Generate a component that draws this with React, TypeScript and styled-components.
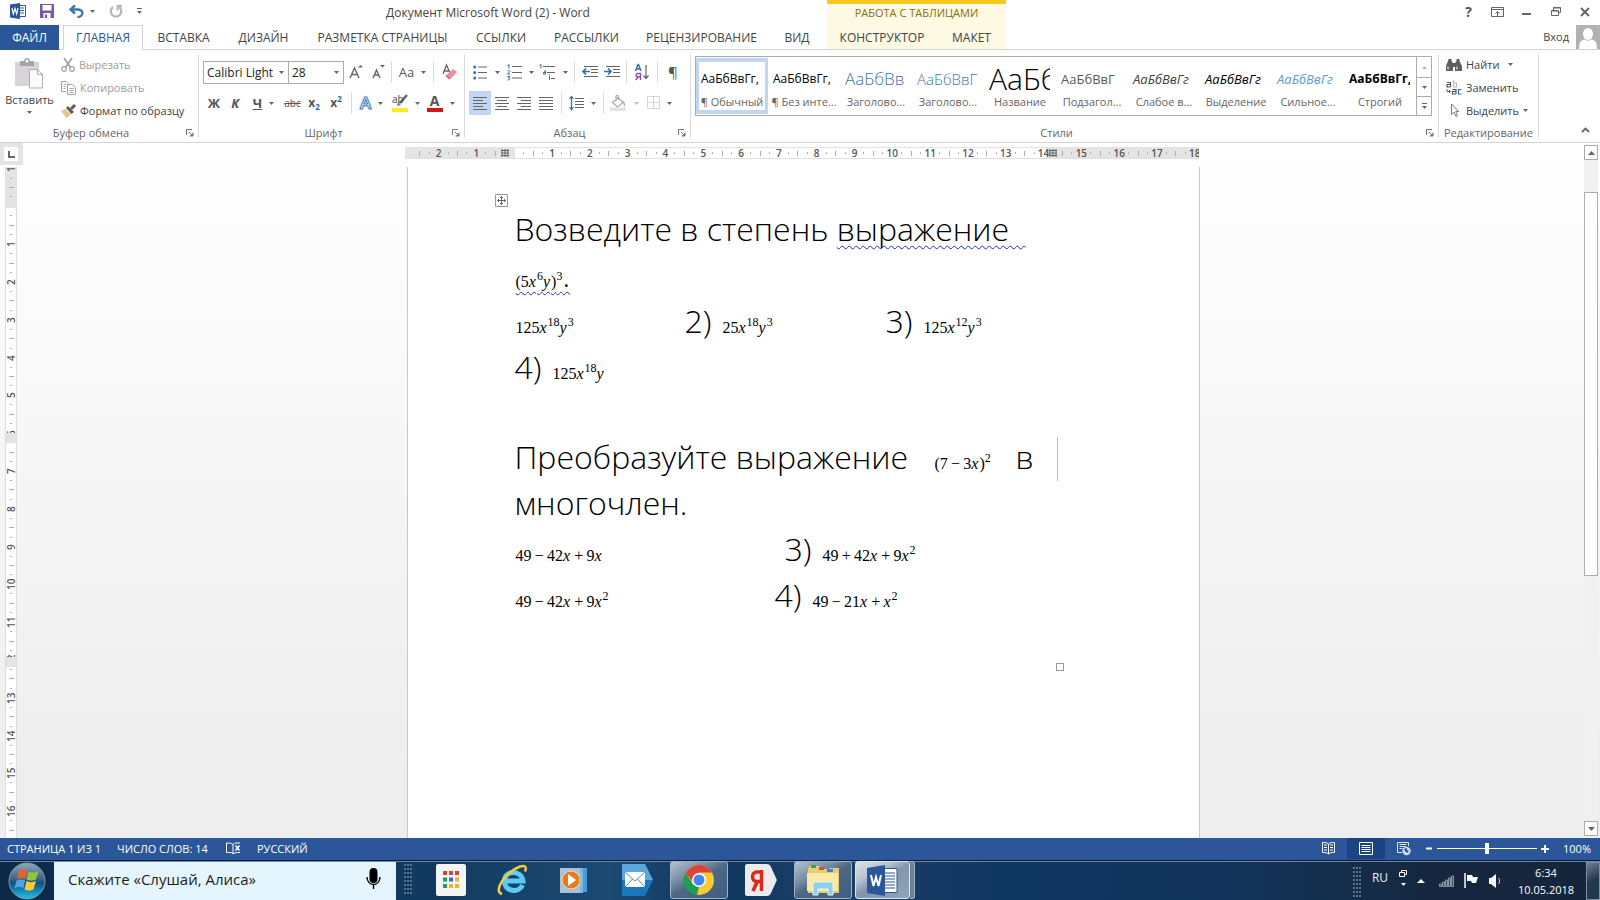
import React from "react";
import styled, { createGlobalStyle, css } from "styled-components";

const blue = "#2b579a";
const ui = `"Open Sans", "Noto Sans", sans-serif`;

const Global = createGlobalStyle`
  *, *::before, *::after { box-sizing: border-box; }
  body { margin: 0; font-family: ${ui}; font-size: 12px; color: #444; background: #fff; }
  button, select, input { font: inherit; color: inherit; }
  button { border: 0; background: none; padding: 0; cursor: pointer; }
  svg { overflow: visible; flex: none; }
`;

const Shell = styled.div`
  display: flex;
  flex-direction: column;
  height: 100vh;
  overflow: hidden;
`;

/* ---------- title bar and tabs ---------- */

const Header = styled.header`
  display: flex;
  height: 50px;
  flex: none;
  border-bottom: 1px solid #d4d4d4;
`;
const HeaderLeft = styled.div`
  width: 827px;
  flex: none;
`;
const TitleRow = styled.div`
  display: flex;
  height: 25px;
  align-items: center;
`;
const QuickAccess = styled.div`
  display: flex;
  align-items: center;
  width: 386px;
  padding: 0 0 3px 10px;
`;
const QuickButton = styled.button<{ $w: number }>`
  display: flex;
  align-items: center;
  gap: 6px;
  width: ${(p) => p.$w}px;
  height: 20px;
`;
const Title = styled.h1`
  margin: 0;
  font-size: 12px;
  font-weight: 400;
  line-height: 24px;
  white-space: nowrap;
`;
const TabRow = styled.nav`
  display: flex;
  height: 25px;
`;
const Tab = styled.button<{ $w: number; $kind?: "file" | "active" }>`
  width: ${(p) => p.$w}px;
  flex: none;
  height: 25px;
  line-height: 24px;
  font-size: 12px;
  text-align: center;
  white-space: nowrap;
  ${(p) => p.$kind === "file" && css`background: ${blue}; color: #fff; margin-right: 4px;`}
  ${(p) => p.$kind === "active" && css`
    height: 25px; background: #fff; color: ${blue};
    border: 1px solid #d4d4d4; border-bottom: 0; line-height: 22px; box-shadow: 0 1px 0 #fff;
  `}
`;
const ContextTabs = styled.div`
  width: 179px;
  flex: none;
  height: 49px;
  background: #fef9e2;
  border-top: 4px solid #f2c91f;
`;
const ContextTitle = styled.div`
  height: 21px;
  line-height: 18px;
  text-align: center;
  font-size: 11px;
  color: #8a6e08;
`;
const HeaderRight = styled.div`
  flex: 1;
  display: flex;
  flex-direction: column;
  align-items: flex-end;
`;
const WindowButtons = styled.div`
  display: flex;
  height: 25px;
  padding-right: 1px;
`;
const WindowButton = styled.button`
  display: flex;
  width: 29px;
  height: 23px;
  align-items: center;
  justify-content: center;
`;
const Account = styled.button`
  display: flex;
  gap: 7px;
  height: 24px;
  line-height: 24px;
  font-size: 11px;
`;

/* ---------- ribbon ---------- */

const Ribbon = styled.div`
  display: flex;
  height: 93px;
  flex: none;
  border-bottom: 1px solid #d4d4d4;
`;
const Group = styled.section<{ $w?: number }>`
  display: flex;
  flex-direction: column;
  width: ${(p) => (p.$w ? p.$w + "px" : "auto")};
  flex: ${(p) => (p.$w ? "none" : "1 1 0")};
  min-width: 0;
  margin: 4px 0;
  border-right: 1px solid #dcdcdc;
`;
const GroupBody = styled.div`
  flex: 1;
  display: flex;
  min-width: 0;
`;
const GroupFoot = styled.footer`
  display: grid;
  grid-template-columns: 1fr 12px;
  column-gap: 4px;
  align-items: center;
  height: 10px;
  line-height: 10px;
  font-size: 11px;
  color: #666;
  text-align: center;
  white-space: nowrap;
`;
const FootLabel = styled.span<{ $wide?: boolean }>`
  grid-column: ${(p) => (p.$wide ? "1 / -1" : "1")};
`;
const Launcher = styled.button`
  display: flex;
  height: 8px;
`;
const Stack = styled.div`
  display: flex;
  flex-direction: column;
  gap: 7px;
  padding: 6px 0 0 4px;
`;
const ToolRow = styled.div`
  display: flex;
  height: 24px;
  align-items: center;
`;
const Tool = styled.button<{ $w: number; $on?: boolean }>`
  display: flex;
  width: ${(p) => p.$w}px;
  height: 24px;
  flex: none;
  align-items: center;
  justify-content: center;
  gap: 7px;
  background: ${(p) => (p.$on ? "#c2d5f2" : "none")};
`;
const ToolSep = styled.span<{ $w: number }>`
  width: 1px;
  height: 22px;
  flex: none;
  margin: 0 ${(p) => Math.floor((p.$w - 1) / 2)}px 0 ${(p) => Math.ceil((p.$w - 1) / 2)}px;
  background: #dcdcdc;
`;
const Glyph = styled.span<{ $size?: number; $bold?: boolean; $italic?: boolean; $under?: boolean; $strike?: boolean; $color?: string }>`
  font-size: ${(p) => p.$size ?? 13}px;
  line-height: 18px;
  font-weight: ${(p) => (p.$bold ? 700 : 400)};
  font-style: ${(p) => (p.$italic ? "italic" : "normal")};
  text-decoration: ${(p) => (p.$under ? "underline" : p.$strike ? "line-through" : "none")};
  color: ${(p) => p.$color ?? "#555"};
  white-space: nowrap;
  sub, sup { font-size: 8px; line-height: 0; color: #2a6bab; }
`;
const OutlinedA = styled.span`
  font-size: 17px;
  line-height: 20px;
  font-weight: 600;
  color: #fff;
  -webkit-text-stroke: 1px #4a80bd;
  text-shadow: 0 0 3px #8fb6e4;
`;
const ColorBar = styled.span<{ $c: string }>`
  display: flex;
  align-items: center;
  justify-content: center;
  width: 16px;
  height: 18px;
  border-bottom: 4px solid ${(p) => p.$c};
`;
const Combo = styled.label<{ $w: number }>`
  display: flex;
  align-items: center;
  width: ${(p) => p.$w}px;
  height: 23px;
  flex: none;
  padding-right: 4px;
  border: 1px solid #ababab;
  & + & { border-left: 0; }
  select {
    flex: 1;
    min-width: 0;
    appearance: none;
    border: 0;
    padding: 0 0 0 3px;
    background: #fff;
    color: #222;
    outline: none;
  }
`;

const PasteButton = styled.button`
  display: flex;
  flex-direction: column;
  align-items: center;
  width: 59px;
  padding-top: 4px;
  line-height: 20px;
  gap: 1px;
  font-size: 11px;
`;
const CommandList = styled.div<{ $left?: number }>`
  display: flex;
  flex-direction: column;
  padding-left: ${(p) => p.$left ?? 0}px;
`;
const Command = styled.button<{ $off?: boolean }>`
  display: flex;
  align-items: center;
  gap: 4px;
  height: 23px;
  padding-bottom: 2px;
  font-size: 11px;
  color: ${(p) => (p.$off ? "#9d9d9d" : "#444")};
  white-space: nowrap;
`;

const Gallery = styled.div`
  display: flex;
  flex: 1;
  min-width: 0;
  height: 60px;
  margin: 2px 6px 0 4px;
  border: 1px solid #ababab;
`;
const StyleList = styled.div`
  display: flex;
  flex: 1;
  overflow: hidden;
  padding: 1px 0;
`;
const StyleCard = styled.button<{ $on?: boolean }>`
  display: flex;
  flex-direction: column;
  width: 72px;
  height: 56px;
  flex: none;
  padding: 0 1px;
  border: 4px solid ${(p) => (p.$on ? "#c2d5f2" : "transparent")};
  border-width: 4px 3px;
`;
const Sample = styled.span<{ $size: number; $color: string; $it?: boolean; $b?: boolean; $light?: boolean }>`
  display: block;
  width: 62px;
  height: 32px;
  line-height: 34px;
  overflow: hidden;
  text-align: left;
  white-space: nowrap;
  padding-left: 1px;
  font-size: ${(p) => p.$size}px;
  color: ${(p) => p.$color};
  font-style: ${(p) => (p.$it ? "italic" : "normal")};
  font-weight: ${(p) => (p.$b ? 700 : p.$light ? 300 : 400)};
`;
const StyleName = styled.span`
  display: flex;
  justify-content: center;
  line-height: 16px;
  font-size: 11px;
  color: #666;
  white-space: nowrap;
`;
const GalleryScroll = styled.div`
  display: grid;
  grid-template-rows: 20px 19px 1fr;
  width: 15px;
  border-left: 1px solid #ababab;
  button { display: flex; align-items: center; justify-content: center; }
  button + button { border-top: 1px solid #ababab; }
`;
const RibbonEnd = styled.div`
  display: flex;
  align-items: flex-end;
  justify-content: flex-end;
  width: 61px;
  flex: none;
  padding: 0 10px 5px 0;
`;

/* ---------- document area ---------- */

const Workspace = styled.main`
  display: grid;
  grid-template-columns: 23px 1fr 19px;
  flex: 1;
  min-height: 0;
  background: linear-gradient(#ffffff, #fdfdfd 10%, #eeeeee 90%);
`;
const SideRuler = styled.div`
  display: flex;
  flex-direction: column;
  min-height: 0;
`;
const Corner = styled.button`
  width: 23px;
  height: 22px;
  flex: none;
  margin-bottom: 2px;
  border: 4px solid #e4e4e4;
  border-right-width: 5px;
  background: #fff;
  display: flex;
  align-items: center;
  justify-content: center;
`;
const VRuler = styled.div`
  position: relative;
  flex: 1;
  width: 12px;
  margin-left: 5px;
  overflow: hidden;
  border-left: 1px solid #dedede;
  border-right: 1px solid #dedede;
  background: linear-gradient(#e4e4e4 41px, #fff 41px);
`;
const VCells = styled.div`
  display: grid;
  grid-template-rows: repeat(20, 1fr);
  height: 756px;
  margin-top: -22px;
`;
const RowMark = styled.span<{ $top: number }>`
  position: absolute;
  left: 0;
  top: ${(p) => p.$top}px;
  width: 100%;
  height: 10px;
  background: #e4e4e4;
`;
const VCell = styled.div`
  display: grid;
  grid-template-rows: repeat(4, 1fr);
  justify-items: center;
  align-items: center;
`;
const VNum = styled.span`
  writing-mode: vertical-rl;
  transform: rotate(180deg);
  font-size: 10px;
  line-height: 10px;
  height: 14px;
  text-align: center;
  font-weight: 600;
  color: #555;
  margin: -3px 0;
`;
const Dash = styled.i<{ $w: number; $h: number }>`
  width: ${(p) => p.$w}px;
  height: ${(p) => p.$h}px;
  background: #b0b0b0;
`;
const Canvas = styled.div`
  display: flex;
  flex-direction: column;
  align-items: center;
  min-height: 0;
  overflow: hidden;
`;
const HRuler = styled.div`
  width: 794px;
  height: 12px;
  flex: none;
  margin: 4px 0 8px;
  padding-left: 10px;
  overflow: hidden;
  border-top: 1px solid #e2e2e2;
  border-bottom: 1px solid #e2e2e2;
  background: linear-gradient(90deg, #e4e4e4 110px, #fff 110px, #fff 641px, #e4e4e4 641px);
`;
const HCells = styled.div`
  display: grid;
  grid-template-columns: repeat(21, 1fr);
  width: 794px;
`;
const HCell = styled.div`
  display: grid;
  grid-template-columns: repeat(4, 1fr);
  justify-items: center;
  align-items: center;
  height: 10px;
`;
const HNum = styled.span`
  display: flex;
  justify-content: center;
  width: 9px;
  font-size: 10px;
  line-height: 10px;
  font-weight: 600;
  color: #555;
`;
const Page = styled.article`
  position: relative;
  width: 793px;
  margin-left: 2px;
  flex: 1;
  min-height: 0;
  padding: 39px 0 0 107px;
  border: 1px solid #c8c8c8;
  border-width: 0 1px;
  background: #fff;
  color: #000;
`;
const Line = styled.p<{ $h?: number }>`
  display: flex;
  align-items: baseline;
  height: ${(p) => p.$h ?? 46}px;
  margin: 0;
  font-size: 32px;
  line-height: 46px;
  font-weight: 300;
  white-space: pre;
`;
const Seg = styled.span<{ $w?: number }>`
  width: ${(p) => (p.$w ? p.$w + "px" : "auto")};
  flex: none;
`;
const Wavy = styled.span`
  text-decoration: underline wavy #1f2bc0 1px;
  text-decoration-skip-ink: none;
  text-underline-offset: 4px;
`;
const Formula = styled.span`
  font-family: "Liberation Serif", serif;
  font-size: 16px;
  font-weight: 400;
  padding-left: 1px;
  sup { font-size: 12px; line-height: 0; vertical-align: 7px; }
  i { padding-right: 1px; }
`;
const TableHandle = styled.button`
  position: absolute;
  left: 87px;
  top: 27px;
  width: 13px;
  height: 13px;
  display: flex;
`;
const CellEdge = styled.span`
  position: absolute;
  left: 649px;
  top: 270px;
  width: 1px;
  height: 44px;
  background: #bdbdbd;
`;
const CellEnd = styled.span`
  position: absolute;
  left: 648px;
  top: 496px;
  width: 8px;
  height: 8px;
  border: 1px solid #999;
`;
const ScrollBar = styled.div`
  display: flex;
  flex-direction: column;
  padding: 2px 2px 2px 3px;
`;
const ScrollButton = styled.button`
  display: flex;
  align-items: center;
  justify-content: center;
  height: 15px;
  flex: none;
  border: 1px solid #ababab;
  background: #fff;
`;
const ScrollTrack = styled.div`
  flex: 1;
  padding-top: 32px;
  background: #f0f0f0;
`;
const ScrollThumb = styled.div`
  height: 61%;
  border: 1px solid #ababab;
  background: #fff;
`;

/* ---------- status bar ---------- */

const StatusBar = styled.footer`
  display: flex;
  align-items: center;
  height: 22px;
  flex: none;
  padding: 0 9px 1px 7px;
  background: ${blue};
  color: #fff;
  white-space: nowrap;
`;
const StatusItem = styled.button<{ $w: number }>`
  display: flex;
  width: ${(p) => p.$w}px;
  height: 21px;
  align-items: center;
  font-size: 11px;
`;
const ViewButton = styled.button<{ $on?: boolean }>`
  display: flex;
  width: 38px;
  height: 21px;
  align-items: center;
  justify-content: center;
  background: ${(p) => (p.$on ? "#1c4384" : "none")};
`;
const Spacer = styled.div`
  flex: 1;
`;
const ZoomButton = styled.button`
  display: flex;
  width: 12px;
  height: 21px;
  align-items: center;
  justify-content: center;
`;
const ZoomRange = styled.input`
  width: 100px;
  height: 12px;
  margin: 0 2px;
  appearance: none;
  background: linear-gradient(#fff, #fff) center / 100% 1px no-repeat;
  &::-webkit-slider-thumb { appearance: none; width: 4px; height: 11px; background: #fff; }
`;
const ZoomValue = styled.span`
  width: 40px;
  text-align: right;
  font-size: 11px;
`;

/* ---------- taskbar ---------- */

const TaskBar = styled.footer`
  display: flex;
  height: 40px;
  flex: none;
  border-top: 1px solid #0b1c33;
  background:
    linear-gradient(90deg, #0c2a48 0, #123a5f 27%, #1b4a73 38%, #10375f 45%, #1b4068 52%, #0f3561 64%, #123357 78%, #16273f 90%, #14253c);
  box-shadow: inset 0 1px 0 #6d87a3;
  color: #fff;
`;
const StartButton = styled.button`
  display: flex;
  width: 54px;
  align-items: center;
  justify-content: center;
`;
const VoiceSearch = styled.label`
  display: flex;
  align-items: center;
  justify-content: space-between;
  width: 342px;
  margin-top: 1px;
  padding: 0 15px 4px 14px;
  background: #e5f5fd;
  input {
    width: 260px;
    border: 0;
    padding: 0;
    outline: none;
    background: none;
    font-size: 15px;
    color: #1d1d1d;
  }
  input::placeholder { color: #1d1d1d; opacity: 1; }
`;
const Grip = styled.span`
  width: 9px;
  height: 31px;
  margin: 3px 0 0 8px;
  flex: none;
  background: radial-gradient(circle at 1px 1px, #5d738c 1px, transparent 1px) 0 0 / 3px 4px;
`;
const AppButton = styled.button<{ $w: number; $open?: boolean; $top?: boolean }>`
  display: flex;
  width: ${(p) => p.$w}px;
  height: 38px;
  flex: none;
  align-items: center;
  justify-content: center;
  ${(p) => p.$open && css`
    border: 1px solid #9fb1c4;
    border-radius: 3px;
    background: linear-gradient(150deg, #b4c1cf 0, #7a8fa6 32%, #4d6885 50%, #3f5e80 100%);
  `}
  ${(p) => p.$top && css`
    border-color: #dfe6ee;
    background: linear-gradient(150deg, #dbe2ea 0, #b4c1cf 32%, #8195ab 50%, #93a5b8 100%);
  `}
`;
const AppList = styled.div`
  display: flex;
  padding-left: 8px;
`;
const OpenGap = styled.span<{ $w: number }>`
  width: ${(p) => p.$w}px;
`;
const StackEdge = styled.span`
  width: 5px;
  height: 38px;
  border: 1px solid #9fb1c4;
  border-left: 0;
  border-radius: 0 3px 3px 0;
  background: #6b8199;
`;
const Tray = styled.div`
  display: flex;
  align-items: center;
`;
const TrayButton = styled.button<{ $w: number; $raised?: boolean }>`
  display: flex;
  flex-direction: column;
  gap: 6px;
  width: ${(p) => p.$w}px;
  height: 38px;
  padding-bottom: ${(p) => (p.$raised ? 6 : 0)}px;
  align-items: center;
  justify-content: center;
  font-size: 12px;
  color: #e8edf2;
`;
const Clock = styled.time`
  width: 80px;
  text-align: center;
  line-height: 17px;
  font-size: 11px;
`;
const ShowDesktop = styled.button`
  width: 14px;
  height: 38px;
  border: 1px solid #7c8fa3;
  background: linear-gradient(150deg, #6d7f92, #22364d 50%);
`;

/* ---------- icons ---------- */

const Arrow = ({ c = "#666", up = false }: { c?: string; up?: boolean }) => (
  <svg width="5" height="3" viewBox="0 0 5 3"><path d={up ? "M0 3h5L2.500 0z" : "M0 0h5L2.500 3z"} fill={c} /></svg>
);
const Svg = ({ w, h, children }: { w: number; h: number; children: React.ReactNode }) => (
  <svg width={w} height={h} viewBox={`0 0 ${w} ${h}`} fill="none" aria-hidden="true">{children}</svg>
);
const Lines = ({ rows, c = "#666", w = 15 }: { rows: [number, number][]; c?: string; w?: number }) => (
  <Svg w={w} h={13}>
    {rows.map(([x, len], i) => <path key={i} d={`M${x} ${i * 3 + 0.5}h${len}`} stroke={c} />)}
  </Svg>
);
const LauncherIcon = () => (
  <Svg w={8} h={8}><path d="M.5 6V.5H6M3 3l3 3M7 3.500V7H3.500" stroke="#777" /><path d="M4 7h3V4z" fill="#777" /></Svg>
);
const WordIcon = () => (
  <Svg w={16} h={16}>
    <path d="M9 2.500h6.500v11H9" stroke={blue} fill="#fff" />
    <path d="M10 5h4M10 7.500h4M10 10h4" stroke={blue} />
    <path d="M0 1.500L10 0v16L0 14.500z" fill={blue} />
    <path d="M2 5l1.300 6L5 5.500 6.700 11 8 5" stroke="#fff" strokeWidth="1.200" />
  </Svg>
);
const SaveIcon = () => (
  <Svg w={14} h={14}>
    <path d="M0 0h14v14H0z" fill="#7f57a5" />
    <path d="M2.500 1h9v5.500h-9zM3.500 9h7v5h-7z" fill="#fff" />
    <path d="M5 10.500h2V14H5z" fill="#7f57a5" />
  </Svg>
);
const UndoIcon = () => (
  <Svg w={15} h={13}>
    <path d="M2 4.500h6.500c7 0 6 7.500 0 7.500" stroke="#3b74b3" strokeWidth="2.400" />
    <path d="M6 .5L1.500 4.500 6 8.500" stroke="#3b74b3" strokeWidth="2.400" />
  </Svg>
);
const RedoIcon = () => (
  <Svg w={14} h={13}>
    <path d="M4 2A5.300 5.300 0 1 0 10 2" stroke="#b5b5b5" strokeWidth="2.200" />
    <path d="M8.500 5.500V1h4.500" stroke="#b5b5b5" strokeWidth="1.800" />
  </Svg>
);
const PasteIcon = () => (
  <Svg w={29} h={31}>
    <path d="M0 4h24v24H0z" fill="#d8d5d8" />
    <path d="M5 3h4c0-4 6-4 6 0h4v5H5z" fill="#a5a5a5" />
    <circle cx="12" cy="3" r="1.500" fill="#fff" />
    <path d="M14.500 11.500h8l5 5V30h-13z" fill="#fbfafb" stroke="#b3b0b3" />
    <path d="M22.500 11.500v5h5" stroke="#b3b0b3" />
  </Svg>
);
const ScissorsIcon = () => (
  <Svg w={14} h={14}>
    <path d="M3 0l6.500 9.500M11 0L4.500 9.500" stroke="#a3a3a3" strokeWidth="1.800" />
    <circle cx="3" cy="11" r="2.300" stroke="#a3a3a3" strokeWidth="1.200" />
    <circle cx="11" cy="11" r="2.300" stroke="#a3a3a3" strokeWidth="1.200" />
  </Svg>
);
const CopyIcon = () => (
  <Svg w={15} h={14}>
    <path d="M5 10.500H.5V.5h5l2 2V4M2.500 3.500h3M2.500 5.500h2M2.500 7.500h2" stroke="#a3a3a3" />
    <path d="M6.500 3.500h5l3 3v7h-8zM8.500 7.500h4M8.500 9.500h4M8.500 11.500h4" stroke="#a3a3a3" />
  </Svg>
);
const BrushIcon = () => (
  <Svg w={15} h={14}>
    <path d="M0 7l4-2 6 5-4 4C4 12 2 10 0 7z" fill="#e8c48c" />
    <path d="M5 4l2-2 6 6-2.500 2z" fill="#5c5c5c" />
    <path d="M10 5l4-4" stroke="#5c5c5c" strokeWidth="3" />
  </Svg>
);
const GrowA = ({ up }: { up: boolean }) => (
  <Svg w={14} h={16}>
    <path d={up ? "M0 14L4.500 4 9 14M1.500 10.500h6" : "M1 14L4.500 6 8 14M2 11h5"} stroke="#666" strokeWidth="1.400" />
    <path d={up ? "M8 3.500h5L10.500 1z" : "M8 1h5l-2.500 2.500z"} fill="#2f6fb0" />
  </Svg>
);
const EraserIcon = () => (
  <Svg w={15} h={16}>
    <path d="M1 10L4.500 1 8 9M2.500 7h4" stroke="#666" strokeWidth="1.300" />
    <path d="M5 10.500L11 5l4 3-6 6.500z" fill="#ee8da0" />
    <path d="M3.500 12L5 10.500l4 4-2 1z" fill="#e0677f" />
  </Svg>
);
const HighlightIcon = () => (
  <Svg w={16} h={14}>
    <path d="M15 1L8 9" stroke="#666" strokeWidth="2.500" />
    <path d="M5 12l1-4 3 3z" fill="#777" />
    <text x="0" y="9" fontSize="10" fill="#444" fontFamily="Open Sans">ab</text>
  </Svg>
);
const BulletsIcon = () => (
  <Svg w={15} h={15}>
    {[2, 7.5, 13].map((y) => <React.Fragment key={y}><circle cx="1.700" cy={y} r="1.500" fill="#2f6fb0" /><path d={`M5 ${y}h9`} stroke="#666" /></React.Fragment>)}
  </Svg>
);
const NumberingIcon = () => (
  <Svg w={15} h={16}>
    {[2.5, 8.500, 14].map((y, i) => <React.Fragment key={y}>
      <path d={["M.5 1.500L2 .5v4", "M.5 7c1-1 2.500-.5 2.500.5L.5 10H3", "M.5 12.500H3L1.500 14c2 0 2 2-.9 2"][i]} stroke="#2f6fb0" />
      <path d={`M5 ${y}h10`} stroke="#666" /></React.Fragment>)}
  </Svg>
);
const MultiIcon = () => (
  <Svg w={17} h={16}>
    <path d="M4 2.500h12M8 8.500h8M12 14.500h4" stroke="#666" />
    <path d="M.5 1.500L2 .5v4M6.500 10V7H5M6.500 8.500h-2V10h2M10.500 12.500V16M10.500 10.500v1" stroke="#2f6fb0" />
  </Svg>
);
const IndentIcon = ({ right }: { right?: boolean }) => (
  <Svg w={16} h={12}>
    <path d="M2 .5h14M9 3.500h7M9 6.500h7M2 10.500h14" stroke="#666" />
    <path d={right ? "M0 5.500h6M4 2.500l3 3-3 3" : "M8 5.500H2M4 2.500l-3 3 3 3"} stroke="#2f6fb0" strokeWidth="1.700" />
  </Svg>
);
const SortIcon = () => (
  <Svg w={14} h={16}>
    <path d="M.5 7L3 .5h.5L6 7M1.500 5h3.500" stroke="#2f6fb0" strokeWidth="1.400" />
    <path d="M5.500 16V9.500H3c-2.500 0-2.500 3.500 0 3.500h2.500M3 13L.8 16" stroke="#8a4fa8" strokeWidth="1.400" />
    <path d="M11 1v13M8.500 11.500L11 14.500l2.500-3" stroke="#666" strokeWidth="1.200" />
  </Svg>
);
const SpacingIcon = () => (
  <Svg w={15} h={16}>
    <path d="M6 3.500h9M6 6.500h9M6 9.500h9M6 12.500h9" stroke="#666" />
    <path d="M2.500 1.500v13M.5 4l2-2.500 2 2.500M.5 12l2 2.500 2-2.500" stroke="#2f6fb0" strokeWidth="1.200" />
  </Svg>
);
const BucketIcon = () => (
  <Svg w={17} h={16}>
    <path d="M2.500 7.500L8 2.500l5 5-5.500 4.500zM6 6V1.500C6 0 8.500 0 8.500 1.500V5" stroke="#aaa" strokeWidth="1.200" />
    <path d="M13 6c2 1 2 3 2 6-1-1-2-3-2-6z" fill="#aaa" />
    <path d="M0 12.500h16V16H0z" fill="#e5e1e5" />
  </Svg>
);
const BordersIcon = () => (
  <Svg w={13} h={14}><path d="M.5 .5h12v12H.5zM6.500 .5v12M.5 6.500h12" stroke="#b7a8bb" strokeDasharray="1 1" /></Svg>
);
const BinocularsIcon = () => (
  <Svg w={16} h={14}>
    <path d="M2.500 1h3v2l1.500 2v8H0V8l2-5zM10.500 1h3v2L16 8v5H9V5l1.500-2z" fill="#5f5f5f" />
    <path d="M6.500 5h3v4h-3z" fill="#5f5f5f" /><path d="M2 8.500v3M11 8.500v3" stroke="#fff" />
  </Svg>
);
const ReplaceIcon = () => (
  <Svg w={16} h={16}>
    <path d="M1 2.500h3.500V7M4.500 4.500H1V7h3.500" stroke="#555" strokeWidth="1.200" />
    <path d="M7.500 0v7h3V3h-3" stroke="#bbb" strokeWidth="1.200" />
    <path d="M6.500 9.500H10V14M10 11.500H6.500V14H10" stroke="#555" strokeWidth="1.200" />
    <path d="M15.500 9.500h-3V14h3" stroke="#2f6fb0" strokeWidth="1.200" />
    <path d="M1 9v2.500h3M3 10l1.500 1.500L3 13" stroke="#2f6fb0" />
  </Svg>
);
const CursorIcon = () => (
  <Svg w={16} h={15}><path d="M5.500 1v10.500l2.500-2.300 2 4.300 1.500-.8-1.800-4.200h3z" stroke="#777" /></Svg>
);
const ProofIcon = () => (
  <Svg w={15} h={13}>
    <path d="M7 11.500C5 10 3 10.500 .5 10.500V1c3 0 5 0 6.500 1.500C8 1.500 9 1 10 1h4M7 2.500v9.500c1.500-1.500 4-1.500 7-1.500" stroke="#fff" />
    <path d="M9.500 3.500l4 5M13.500 3.500l-4 5" stroke="#fff" strokeWidth="1.600" />
  </Svg>
);
const ReadIcon = () => (
  <Svg w={13} h={13}>
    <path d="M6.500 2C5 .5 3 .5 .5 .5v10c3 0 4.500 0 6 1.500 1.500-1.500 3-1.500 6-1.500V.5c-2.500 0-4.500 0-6 1.500zM6.500 2v10M2 3h3M2 5.500h3M2 8h3M8 3h3M8 5.500h3M8 8h3" stroke="#fff" />
  </Svg>
);
const PrintIcon = () => (
  <Svg w={14} h={14}><path d="M.5 .5h13v12H.5zM2.500 3.500h9M2.500 5.500h9M2.500 7.500h9M2.500 9.500h9" stroke="#fff" /></Svg>
);
const WebIcon = () => (
  <Svg w={14} h={14}>
    <path d="M5 10.500H.5V.5h11V4M2.500 2.500h7M2.500 4.500h6M2.500 6.500h3" stroke="#dce6f4" />
    <circle cx="9.500" cy="9" r="4.200" fill="#cfdcef" /><path d="M7 7l3-1v2l2 1-2 2-2-2z" fill={blue} />
  </Svg>
);
const MicIcon = () => (
  <Svg w={15} h={22}>
    <rect x="3.500" y="0" width="8" height="15" rx="4" fill="#000" />
    <path d="M1 9c0 10 13 10 13 0M7.500 17v4" stroke="#000" strokeWidth="1.400" />
  </Svg>
);
const StartOrb = () => (
  <svg width="38" height="38" viewBox="0 0 38 38" aria-hidden="true">
    <defs>
      <linearGradient id="orb" x1="0" y1="0" x2="0" y2="1">
        <stop offset="0" stopColor="#93a7b8" /><stop offset=".45" stopColor="#3d6384" /><stop offset=".55" stopColor="#0f4f7f" /><stop offset="1" stopColor="#1fc3f2" />
      </linearGradient>
    </defs>
    <circle cx="19" cy="19" r="18" fill="url(#orb)" stroke="#7d98ad" />
    <path d="M11 9c3-2 5-2 8 0l-1.500 8c-3-1.500-5.500-1.500-8.500 0z" fill="#e8622c" />
    <path d="M20.500 9.500c3 1.500 6 1.500 10-.5L28 17.500c-3 1.500-6 1.500-9.500 0z" fill="#8fc63f" />
    <path d="M8.500 18.500c3-1.500 5.500-1.500 8.500 0L15.500 26c-3-1.500-5.500-1.500-9 0z" fill="#4aa6e0" />
    <path d="M18.500 19c3 1.500 6 1.500 9.500 0L25.500 27.500c-3 1.500-6 1.500-9 0z" fill="#fcc92f" />
  </svg>
);
const AppsIcon = () => (
  <Svg w={30} h={32}>
    <rect width="30" height="32" rx="2" fill="#f4f4f4" />
    {["#d0463b", "#d0463b", "#d0463b", "#1e9e58", "#2a72c8", "#e8b52b", "#1e9e58", "#e8b52b", "#e8b52b"].map((c, i) => (
      <path key={i} d={`M${7 + (i % 3) * 6} ${7 + Math.floor(i / 3) * 6.5}h4v4h-4z`} fill={c} />
    ))}
  </Svg>
);
const IeIcon = () => (
  <Svg w={31} h={32}>
    <path d="M25.500 21c-3.500 8.500-18 7-18-4S24.500 5.500 26 17H9" stroke="#5ccbf5" strokeWidth="5" />
    <path d="M5 30C-4 28 7 9 23 2.500c5-1.500 7 0 5 5" stroke="#f2cc3a" strokeWidth="2.500" />
  </Svg>
);
const PlayerIcon = () => (
  <Svg w={28} h={27}>
    <path d="M8 1h19v24H8z" fill="#4d9bd4" /><path d="M4 1h19v25H4z" fill="#7fb9e0" />
    <path d="M0 1h20v25H0z" fill="#a9c3d6" />
    <circle cx="11" cy="13" r="9" fill="#ea7a1f" stroke="#fbd9b4" /><path d="M8 7l8 6-8 6z" fill="#fff" />
  </Svg>
);
const MailIcon = () => (
  <Svg w={32} h={32}>
    <path d="M1 0h23l8 16-8 16H1z" fill="#1b76bb" /><path d="M1 0h23l8 16H1z" fill="#5ba7dd" />
    <path d="M4 8h20v15H4z" fill="#fff" /><path d="M4 8l10 9 10-9M4 23l7.500-8M24 23l-7.500-8" stroke="#4a90c8" />
  </Svg>
);
const ChromeIcon = () => (
  <Svg w={30} h={30}>
    <circle cx="15" cy="15" r="15" fill="#fbc934" />
    <path d="M2 7.500C8-2.500 22-2.500 28 7.500H15L9 18z" fill="#dc4437" />
    <path d="M2 7.500l6.500 11.500L15 22l-2 8C0 28-3.500 16 2 7.500z" fill="#1f9d57" />
    <circle cx="15" cy="15" r="7" fill="#fff" /><circle cx="15" cy="15" r="5.500" fill="#4486f4" />
  </Svg>
);
const YandexIcon = () => (
  <Svg w={32} h={32}>
    <path d="M2 0h20c2 0 3 1 4 3l5 11c1 2 1 2 0 4l-5 11c-1 2-2 3-4 3H2c-1 0-2-1-2-2V2C0 1 1 0 2 0z" fill="#ececec" />
    <path d="M16.500 6v21M16.500 8H12c-6 0-6 9.500 0 9.500h4.500M12.500 17L8 27" stroke="#e0251b" strokeWidth="3.500" />
  </Svg>
);
const FolderIcon = () => (
  <Svg w={34} h={32}>
    <path d="M2 5l2-3h10v3h8l2-1h9v25H2z" fill="#e6cd75" />
    <path d="M5 1h5v3H5z" fill="#35a545" /><path d="M13 3h5v3h-5z" fill="#d44" /><path d="M21 5h6v3h-6z" fill="#3b86d0" />
    <path d="M1 9h31v18H1z" fill="#fae9a2" />
    <path d="M7 31V21c0-2 1-3 3-3h14c2 0 3 1 3 3v10h-5v-6H12v6z" fill="#8ed0ec" stroke="#e2f5fd" />
  </Svg>
);
const BigWordIcon = () => (
  <Svg w={31} h={31}>
    <path d="M15 3.500h15v24H15z" fill="#fff" stroke={blue} />
    <path d="M17 8h11M17 11h11M17 14h11M17 17h11M17 20h11M17 23h11" stroke={blue} />
    <path d="M0 3l18-3v31L0 28z" fill={blue} />
    <path d="M4 10l2.500 11L9 12l2.500 9L14 10" stroke="#fff" strokeWidth="2" />
  </Svg>
);
const AvatarIcon = () => (
  <Svg w={24} h={24}>
    <path d="M0 0h24v24H0z" fill="#b1b1b1" />
    <path d="M3 24c0-7 2-9 6-9.500L12 16l3-1.500c4 .5 6 2.500 6 9.500z" fill="#fff" />
    <ellipse cx="12" cy="9" rx="5" ry="6" fill="#fff" />
  </Svg>
);
const GridMark = () => (
  <Svg w={8} h={8}><path d="M1 0v8M4 0v8M7 0v8M0 1.500h8M0 4h8M0 6.500h8" stroke="#666" /></Svg>
);

/* ---------- data ---------- */

const tabs: [string, number][] = [
  ["ВСТАВКА", 81], ["ДИЗАЙН", 79], ["РАЗМЕТКА СТРАНИЦЫ", 159], ["ССЫЛКИ", 78],
  ["РАССЫЛКИ", 93], ["РЕЦЕНЗИРОВАНИЕ", 137], ["ВИД", 54],
];

type StyleDef = { name: string; text: string; size: number; color: string; it?: boolean; b?: boolean; light?: boolean };
const styleDefs: StyleDef[] = [
  { name: "¶ Обычный", text: "АаБбВвГг,", size: 12, color: "#000" },
  { name: "¶ Без инте...", text: "АаБбВвГг,", size: 12, color: "#000" },
  { name: "Заголово...", text: "АаБбВвГ", size: 17, color: "#3e76ae", light: true },
  { name: "Заголово...", text: "АаБбВвГ", size: 15, color: "#3e76ae", light: true },
  { name: "Название", text: "АаБб", size: 30, color: "#000", light: true },
  { name: "Подзагол...", text: "АаБбВвГ", size: 13, color: "#5a5a5a" },
  { name: "Слабое в...", text: "АаБбВвГг", size: 13, color: "#404040", it: true },
  { name: "Выделение", text: "АаБбВвГг", size: 13, color: "#000", it: true },
  { name: "Сильное...", text: "АаБбВвГг", size: 13, color: "#5b9bd5", it: true },
  { name: "Строгий", text: "АаБбВвГг,", size: 12, color: "#000", b: true },
];

/* Centimetre marks: the margin side first, then zero (no label), then the text area. */
const hLabels = Array.from({ length: 21 }, (_, i) => (i === 2 ? "" : String(Math.abs(i - 2))));
const vLabels = Array.from({ length: 20 }, (_, i) => (i === 1 ? "" : String(Math.abs(i - 1))));

const X = ({ p }: { p?: string }) => <><i>x</i>{p && <sup>{p}</sup>}</>;
const Y = ({ p }: { p?: string }) => <><i>y</i>{p && <sup>{p}</sup>}</>;
const Minus = () => <>{"\u2009−\u2009"}</>;
const Plus = () => <>{"\u2009+\u2009"}</>;

export default function App() {
  return (
    <Shell>
      <Global />
      <Header>
        <HeaderLeft>
          <TitleRow>
            <QuickAccess>
              <QuickButton $w={30} aria-label="Word"><WordIcon /></QuickButton>
              <QuickButton $w={29} aria-label="Сохранить"><SaveIcon /></QuickButton>
              <QuickButton $w={40} aria-label="Отменить"><UndoIcon /><Arrow /></QuickButton>
              <QuickButton $w={28} aria-label="Вернуть"><RedoIcon /></QuickButton>
              <QuickButton $w={10} aria-label="Настройка панели">
                <Svg w={5} h={6}><path d="M0 .5h5" stroke="#666" /><path d="M0 3h5L2.500 6z" fill="#666" /></Svg>
              </QuickButton>
            </QuickAccess>
            <Title>Документ Microsoft Word (2) - Word</Title>
          </TitleRow>
          <TabRow>
            <Tab $w={59} $kind="file">ФАЙЛ</Tab>
            <Tab $w={80} $kind="active">ГЛАВНАЯ</Tab>
            {tabs.map(([t, w]) => <Tab key={t} $w={w}>{t}</Tab>)}
          </TabRow>
        </HeaderLeft>
        <ContextTabs>
          <ContextTitle>РАБОТА С ТАБЛИЦАМИ</ContextTitle>
          <TabRow>
            <Tab $w={110}>КОНСТРУКТОР</Tab>
            <Tab $w={69}>МАКЕТ</Tab>
          </TabRow>
        </ContextTabs>
        <HeaderRight>
          <WindowButtons>
            <WindowButton aria-label="Справка"><Glyph $bold $size={14}>?</Glyph></WindowButton>
            <WindowButton aria-label="Параметры ленты">
              <Svg w={13} h={10}><path d="M.5 .5h12v9H.5zM.5 2.500h12M6.500 9V4.500M4.500 6.500l2-2 2 2" stroke="#666" /></Svg>
            </WindowButton>
            <WindowButton aria-label="Свернуть"><Svg w={10} h={6}><path d="M0 5h9" stroke="#666" strokeWidth="2" /></Svg></WindowButton>
            <WindowButton aria-label="Восстановить">
              <Svg w={10} h={9}><path d="M.5 3.500h7v5h-7zM2.500 3V.5h7v5H8M0 4h8M2 1h8" stroke="#666" /></Svg>
            </WindowButton>
            <WindowButton aria-label="Закрыть"><Svg w={10} h={10}><path d="M1 1l8 8M9 1L1 9" stroke="#666" strokeWidth="2" /></Svg></WindowButton>
          </WindowButtons>
          <Account>Вход<AvatarIcon /></Account>
        </HeaderRight>
      </Header>

      <Ribbon>
        <Group $w={199}>
          <GroupBody>
            <PasteButton><PasteIcon />Вставить<Arrow /></PasteButton>
            <CommandList $left={2}>
              <Command $off><ScissorsIcon />Вырезать</Command>
              <Command $off><CopyIcon />Копировать</Command>
              <Command><BrushIcon />Формат по образцу</Command>
            </CommandList>
          </GroupBody>
          <GroupFoot><FootLabel>Буфер обмена</FootLabel><Launcher aria-label="Буфер обмена"><LauncherIcon /></Launcher></GroupFoot>
        </Group>

        <Group $w={266}>
          <GroupBody>
            <Stack>
              <ToolRow>
                <Combo $w={86}><select aria-label="Шрифт"><option>Calibri Light</option></select><Arrow /></Combo>
                <Combo $w={55}><select aria-label="Размер шрифта"><option>28</option></select><Arrow /></Combo>
                <Tool $w={25} aria-label="Увеличить шрифт"><GrowA up /></Tool>
                <Tool $w={20} aria-label="Уменьшить шрифт"><GrowA up={false} /></Tool>
                <ToolSep $w={5} />
                <Tool $w={37} aria-label="Регистр"><Glyph>Aa</Glyph><Arrow /></Tool>
                <ToolSep $w={5} />
                <Tool $w={26} aria-label="Очистить формат"><EraserIcon /></Tool>
              </ToolRow>
              <ToolRow>
                <Tool $w={22}><Glyph $bold>Ж</Glyph></Tool>
                <Tool $w={20}><Glyph $bold $italic>К</Glyph></Tool>
                <Tool $w={37}><Glyph $bold $under>Ч</Glyph><Arrow /></Tool>
                <Tool $w={21}><Glyph $strike $size={10}>abc</Glyph></Tool>
                <Tool $w={22}><Glyph $bold $size={12}>x<sub>2</sub></Glyph></Tool>
                <Tool $w={22}><Glyph $bold $size={12}>x<sup>2</sup></Glyph></Tool>
                <ToolSep $w={8} />
                <Tool $w={33}><OutlinedA>A</OutlinedA><Arrow /></Tool>
                <Tool $w={35} aria-label="Цвет выделения"><ColorBar $c="#f7ee1b"><HighlightIcon /></ColorBar><Arrow /></Tool>
                <Tool $w={35}><ColorBar $c="#d01717"><Glyph $bold $size={14}>A</Glyph></ColorBar><Arrow /></Tool>
              </ToolRow>
            </Stack>
          </GroupBody>
          <GroupFoot><FootLabel>Шрифт</FootLabel><Launcher aria-label="Шрифт"><LauncherIcon /></Launcher></GroupFoot>
        </Group>

        <Group $w={226}>
          <GroupBody>
            <Stack>
              <ToolRow>
                <Tool $w={34} aria-label="Маркеры"><BulletsIcon /><Arrow /></Tool>
                <Tool $w={34} aria-label="Нумерация"><NumberingIcon /><Arrow /></Tool>
                <Tool $w={33} aria-label="Многоуровневый список"><MultiIcon /><Arrow /></Tool>
                <ToolSep $w={8} />
                <Tool $w={23} aria-label="Уменьшить отступ"><IndentIcon /></Tool>
                <Tool $w={22} aria-label="Увеличить отступ"><IndentIcon right /></Tool>
                <ToolSep $w={6} />
                <Tool $w={25} aria-label="Сортировка"><SortIcon /></Tool>
                <ToolSep $w={6} />
                <Tool $w={26}><Glyph $size={15}>¶</Glyph></Tool>
              </ToolRow>
              <ToolRow>
                <Tool $w={22} $on aria-label="По левому краю"><Lines rows={[[0, 14], [0, 10], [0, 14], [0, 10], [0, 14]]} /></Tool>
                <Tool $w={22} aria-label="По центру"><Lines rows={[[0, 14], [2, 10], [0, 14], [2, 10], [0, 14]]} /></Tool>
                <Tool $w={22} aria-label="По правому краю"><Lines rows={[[0, 14], [4, 10], [0, 14], [4, 10], [0, 14]]} /></Tool>
                <Tool $w={22} aria-label="По ширине"><Lines rows={[[0, 14], [0, 14], [0, 14], [0, 14], [0, 14]]} /></Tool>
                <ToolSep $w={8} />
                <Tool $w={34} aria-label="Интервал"><SpacingIcon /><Arrow /></Tool>
                <ToolSep $w={8} />
                <Tool $w={35} aria-label="Заливка"><BucketIcon /><Arrow c="#bbb" /></Tool>
                <Tool $w={34} aria-label="Границы"><BordersIcon /><Arrow /></Tool>
              </ToolRow>
            </Stack>
          </GroupBody>
          <GroupFoot><FootLabel>Абзац</FootLabel><Launcher aria-label="Абзац"><LauncherIcon /></Launcher></GroupFoot>
        </Group>

        <Group>
          <GroupBody>
            <Gallery>
              <StyleList>
                {styleDefs.map((s, i) => (
                  <StyleCard key={i} $on={i === 0}>
                    <Sample $size={s.size} $color={s.color} $it={s.it} $b={s.b} $light={s.light}>{s.text}</Sample>
                    <StyleName>{s.name}</StyleName>
                  </StyleCard>
                ))}
              </StyleList>
              <GalleryScroll>
                <button aria-label="Вверх"><Arrow up c="#bbb" /></button>
                <button aria-label="Вниз"><Arrow /></button>
                <button aria-label="Ещё"><Svg w={5} h={6}><path d="M0 .5h5" stroke="#666" /><path d="M0 3h5L2.500 6z" fill="#666" /></Svg></button>
              </GalleryScroll>
            </Gallery>
          </GroupBody>
          <GroupFoot><FootLabel>Стили</FootLabel><Launcher aria-label="Стили"><LauncherIcon /></Launcher></GroupFoot>
        </Group>

        <Group $w={100}>
          <GroupBody>
            <CommandList $left={7}>
              <Command><BinocularsIcon />Найти<OpenGap $w={1} /><Arrow /></Command>
              <Command><ReplaceIcon />Заменить</Command>
              <Command><CursorIcon />Выделить<Arrow /></Command>
            </CommandList>
          </GroupBody>
          <GroupFoot><FootLabel $wide>Редактирование</FootLabel></GroupFoot>
        </Group>
        <RibbonEnd>
          <button aria-label="Свернуть ленту"><Svg w={9} h={6}><path d="M1 5l3.500-3.500L8 5" stroke="#666" strokeWidth="1.800" /></Svg></button>
        </RibbonEnd>
      </Ribbon>

      <Workspace>
        <SideRuler>
          <Corner aria-label="Табуляция"><Svg w={7} h={7}><path d="M1 0v6h6" stroke="#666" strokeWidth="2" /></Svg></Corner>
          <VRuler>
            <VCells>
              {vLabels.map((n, i) => (
                <VCell key={i}><Dash $w={5} $h={1} /><Dash $w={2} $h={1} /><VNum>{n}</VNum><Dash $w={2} $h={1} /></VCell>
              ))}
            </VCells>
            <RowMark $top={266} />
            <RowMark $top={490} />
          </VRuler>
        </SideRuler>
        <Canvas>
          <HRuler>
            <HCells>
              {hLabels.map((n, i) => (
                <HCell key={i}>
                  <Dash $w={1} $h={5} />
                  {i === 2 ? <GridMark /> : <Dash $w={1} $h={2} />}
                  <HNum>{n}</HNum>
                  {i === 16 ? <GridMark /> : <Dash $w={1} $h={2} />}
                </HCell>
              ))}
            </HCells>
          </HRuler>
          <Page>
            <TableHandle aria-label="Выделить таблицу">
              <Svg w={13} h={13}><path d="M.5 .5h12v12H.5z" stroke="#999" /><path d="M6.500 2.500v8M2.500 6.500h8M5 4l1.500-1.500L8 4M5 9l1.500 1.500L8 9M4 5L2.500 6.500 4 8M9 5l1.500 1.500L9 8" stroke="#444" strokeWidth=".8" /></Svg>
            </TableHandle>
            <CellEdge />
            <CellEnd />
            <Line><Seg>Возведите в степень </Seg><Wavy>выражение  </Wavy></Line>
            <Line><Wavy><Formula>(5<X p="6" /><Y />)<sup>3</sup></Formula>.</Wavy></Line>
            <Line>
              <Seg $w={170}><Formula>125<X p="18" /><Y p="3" /></Formula></Seg>
              <Seg $w={37}>2)</Seg><Seg $w={164}><Formula>25<X p="18" /><Y p="3" /></Formula></Seg>
              <Seg $w={37}>3)</Seg><Seg><Formula>125<X p="12" /><Y p="3" /></Formula></Seg>
            </Line>
            <Line><Seg $w={37}>4)</Seg><Formula>125<X p="18" /><Y /></Formula></Line>
            <Line $h={44} />
            <Line><Seg $w={419}>Преобразуйте выражение</Seg><Seg $w={82}><Formula>(7<Minus />3<X />)<sup>2</sup></Formula></Seg><Seg>в</Seg></Line>
            <Line>многочлен.</Line>
            <Line><Seg $w={270}><Formula>49<Minus />42<X /><Plus />9<X /></Formula></Seg><Seg $w={37}>3)</Seg><Formula>49<Plus />42<X /><Plus />9<X p="2" /></Formula></Line>
            <Line><Seg $w={260}><Formula>49<Minus />42<X /><Plus />9<X p="2" /></Formula></Seg><Seg $w={37}>4)</Seg><Formula>49<Minus />21<X /><Plus /><X p="2" /></Formula></Line>
          </Page>
        </Canvas>
        <ScrollBar>
          <ScrollButton aria-label="Прокрутить вверх"><Svg w={7} h={4}><path d="M0 4h7L3.500 0z" fill="#666" /></Svg></ScrollButton>
          <ScrollTrack><ScrollThumb /></ScrollTrack>
          <ScrollButton aria-label="Прокрутить вниз"><Svg w={7} h={4}><path d="M0 0h7L3.500 4z" fill="#666" /></Svg></ScrollButton>
        </ScrollBar>
      </Workspace>

      <StatusBar>
        <StatusItem $w={110}>СТРАНИЦА 1 ИЗ 1</StatusItem>
        <StatusItem $w={109}>ЧИСЛО СЛОВ: 14</StatusItem>
        <StatusItem $w={31} aria-label="Правописание"><ProofIcon /></StatusItem>
        <StatusItem $w={60}>РУССКИЙ</StatusItem>
        <Spacer />
        <ViewButton aria-label="Режим чтения"><ReadIcon /></ViewButton>
        <ViewButton $on aria-label="Разметка страницы"><PrintIcon /></ViewButton>
        <ViewButton aria-label="Веб-документ"><WebIcon /></ViewButton>
        <ZoomButton aria-label="Уменьшить"><Svg w={7} h={3}><path d="M0 1.500h6" stroke="#fff" strokeWidth="2" /></Svg></ZoomButton>
        <ZoomRange type="range" aria-label="Масштаб" defaultValue={50} />
        <ZoomButton aria-label="Увеличить"><Svg w={8} h={8}><path d="M0 4h8M4 0v8" stroke="#fff" strokeWidth="2" /></Svg></ZoomButton>
        <ZoomValue>100%</ZoomValue>
      </StatusBar>

      <TaskBar>
        <StartButton aria-label="Пуск"><StartOrb /></StartButton>
        <VoiceSearch><input aria-label="Поиск" placeholder="Скажите «Слушай, Алиса»" /><MicIcon /></VoiceSearch>
        <Grip />
        <AppList>
          <AppButton $w={60} aria-label="Приложения"><AppsIcon /></AppButton>
          <AppButton $w={62} aria-label="Internet Explorer"><IeIcon /></AppButton>
          <AppButton $w={62} aria-label="Проигрыватель"><PlayerIcon /></AppButton>
          <AppButton $w={64} aria-label="Почта"><MailIcon /></AppButton>
          <OpenGap $w={1} />
          <AppButton $w={58} $open aria-label="Chrome"><ChromeIcon /></AppButton>
          <AppButton $w={66} aria-label="Яндекс"><YandexIcon /></AppButton>
          <AppButton $w={58} $open aria-label="Проводник"><FolderIcon /></AppButton>
          <OpenGap $w={3} />
          <AppButton $w={55} $open $top aria-label="Word"><BigWordIcon /></AppButton>
          <StackEdge />
        </AppList>
        <Spacer />
        <Tray>
          <Grip />
          <TrayButton $w={36} $raised>RU</TrayButton>
          <TrayButton $w={10} $raised aria-label="Языковая панель">
            <Svg w={8} h={7}><path d="M.5 2.500h5v4h-5zM2.500 2V.5h5v4H6" stroke="#fff" /></Svg><Arrow c="#fff" />
          </TrayButton>
          <TrayButton $w={26} aria-label="Скрытые значки"><Svg w={8} h={4}><path d="M0 4h8L4 0z" fill="#fff" /></Svg></TrayButton>
          <TrayButton $w={24} aria-label="Сеть">
            <Svg w={15} h={12}>{[0, 1, 2, 3, 4].map((i) => <path key={i} d={`M${i * 3 + 0.5} ${9 - i * 2}h2V11.500h-2z`} stroke="#8996a5" fill="#3b4b5e" />)}</Svg>
          </TrayButton>
          <TrayButton $w={26} aria-label="Центр поддержки">
            <Svg w={15} h={15}><path d="M1 0v15" stroke="#fff" strokeWidth="1.500" /><path d="M3 2h5l1 2h5l-2 6H8L7 8H3z" fill="#fff" /></Svg>
          </TrayButton>
          <TrayButton $w={22} aria-label="Громкость">
            <Svg w={12} h={14}><path d="M0 4h2l5-4v14l-5-4H0z" fill="#fff" /><path d="M9.500 4c1.500 2 1.500 4 0 6" stroke="#c9d3de" /></Svg>
          </TrayButton>
          <Clock>6:34<br />10.05.2018</Clock>
          <ShowDesktop aria-label="Показать рабочий стол" />
        </Tray>
      </TaskBar>
    </Shell>
  );
}
